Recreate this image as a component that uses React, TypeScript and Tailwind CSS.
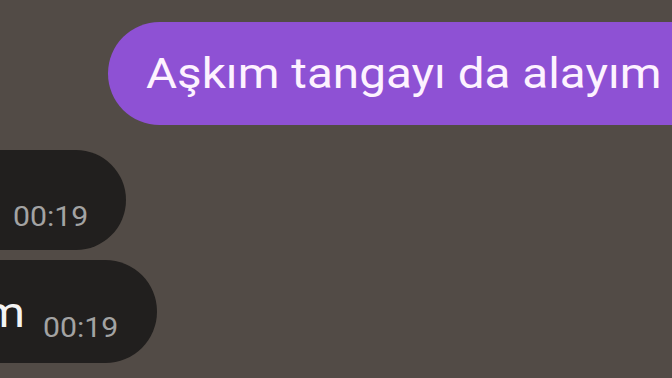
import React from 'react';

export default function App() {
  return (
    <div
      className="w-[672px] h-[378px] overflow-hidden bg-[#524b46] flex flex-col"
      style={{ fontFamily: 'Roboto, "Noto Sans", sans-serif' }}
    >
      {/* Outgoing message */}
      <div className="mt-[22px] ml-[108px] w-[640px] h-[103px] shrink-0 rounded-l-full bg-[#8e51d4] flex items-center pl-[38px]">
        <span className="inline-block origin-left scale-x-[1.135] text-[42px] leading-none text-[#fdf2ff] whitespace-nowrap">
          Aşkım tangayı da alayım
        </span>
      </div>

      {/* Incoming messages */}
      <div className="mt-[25px] -ml-[100px] w-[226px] h-[100px] shrink-0 rounded-full bg-[#211f1e] flex items-end justify-end pr-[38px] pb-[19px]">
        <span className="inline-block origin-right scale-x-[1.12] text-[27px] leading-none text-[#a3a3a3]">00:19</span>
      </div>

      <div className="mt-[10px] -ml-[100px] w-[257px] h-[103px] shrink-0 rounded-full bg-[#211f1e] flex items-end justify-end pr-[39px] pb-[21px]">
        <span className="inline-block origin-right scale-x-[1.14] text-[42px] leading-none text-[#f4f4f4] mb-[8px] mr-[26px] whitespace-nowrap">
          Tamam
        </span>
        <span className="inline-block origin-right scale-x-[1.12] text-[27px] leading-none text-[#a3a3a3]">00:19</span>
      </div>
    </div>
  );
}
